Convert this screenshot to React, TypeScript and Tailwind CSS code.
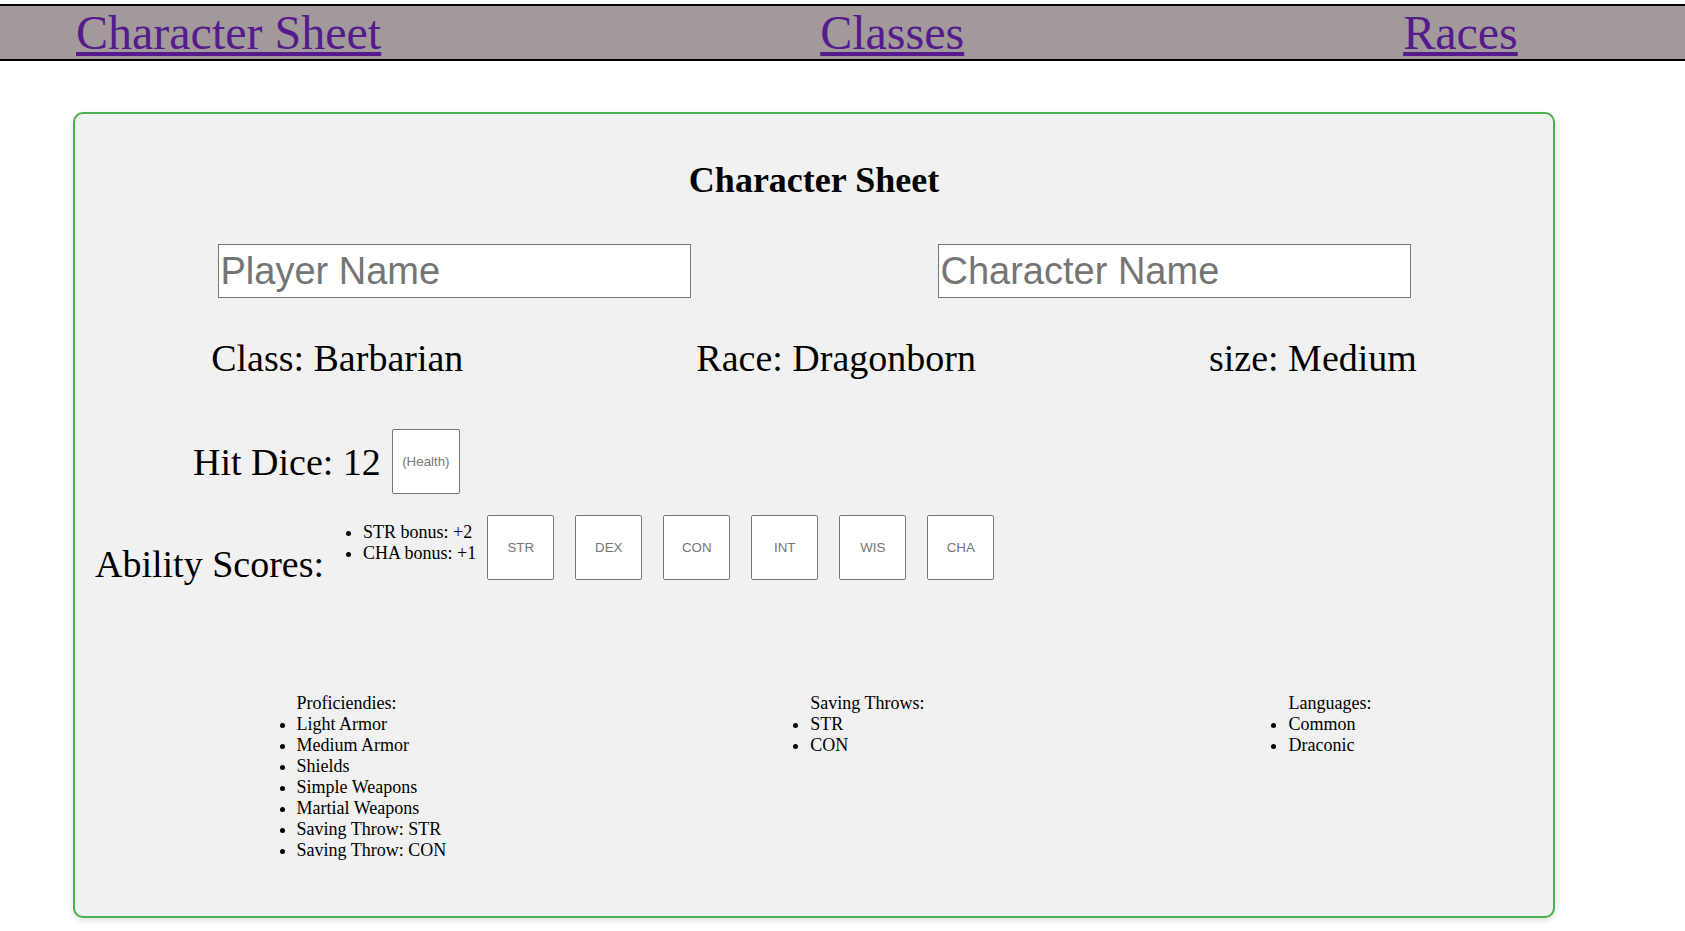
import React from "react";

const serif = "font-['Liberation_Serif',serif]";

const abilities = ["STR", "DEX", "CON", "INT", "WIS", "CHA"];

const proficiencies = [
  "Light Armor",
  "Medium Armor",
  "Shields",
  "Simple Weapons",
  "Martial Weapons",
  "Saving Throw: STR",
  "Saving Throw: CON",
];

const ScoreBox = ({ label, className = "" }: { label: string; className?: string }) => (
  <input
    type="text"
    placeholder={label}
    className={`w-[67px] h-[65px] bg-white border border-[#767676] rounded-[2px] text-center text-[13.33px] font-['Liberation_Sans',sans-serif] placeholder:text-[#757575] outline-none ${className}`}
  />
);

const ListColumn = ({ title, items }: { title: string; items: string[] }) => (
  <div className="pl-[40px] text-[18px] leading-[21px]">
    <div>{title}</div>
    <ul className="list-disc">
      {items.map((item) => (
        <li key={item}>{item}</li>
      ))}
    </ul>
  </div>
);

export default function App() {
  return (
    <div className={`min-h-screen bg-white text-black ${serif}`}>
      <nav className="mt-[4px] bg-[#a29a9a] border-y-2 border-black h-[57px] flex items-center">
        <div className="ml-[76px] flex gap-[439px] text-[48px] leading-[53px]">
          <a href="#" className="text-[#551a8b] underline">Character Sheet</a>
          <a href="#" className="text-[#551a8b] underline">Classes</a>
          <a href="#" className="text-[#551a8b] underline">Races</a>
        </div>
      </nav>

      <main className="mt-[51px] ml-[73px] w-[1482px] bg-[#f1f1f1] border-2 border-[#4caf50] rounded-[10px] shadow-[0_3px_6px_rgba(0,0,0,0.12)] pb-[55px]">
        <h1 className="mt-[46px] text-center text-[36px] font-bold leading-[41px]">Character Sheet</h1>

        <div className="mt-[43px] flex justify-center gap-[247px]">
          <input
            type="text"
            placeholder="Player Name"
            className="w-[473px] h-[54px] bg-white border border-[#767676] px-[2px] text-[38px] font-['Liberation_Sans',sans-serif] placeholder:text-[#757575] outline-none"
          />
          <input
            type="text"
            placeholder="Character Name"
            className="w-[473px] h-[54px] bg-white border border-[#767676] px-[2px] text-[38px] font-['Liberation_Sans',sans-serif] placeholder:text-[#757575] outline-none"
          />
        </div>

        <div className="mt-[38px] flex justify-center gap-[233px] text-[38px] leading-[44px]">
          <span>Class: Barbarian</span>
          <span>Race: Dragonborn</span>
          <span>size: Medium</span>
        </div>

        <div className="mt-[49px] ml-[118px] flex items-center">
          <span className="text-[38px] leading-[44px]">Hit Dice: 12</span>
          <ScoreBox label="(Health)" className="ml-[11px] w-[68px] h-[64px]" />
        </div>

        <div className="mt-[21px] ml-[20px] flex items-start">
          <span className="mt-[27px] text-[38px] leading-[44px]">Ability Scores:</span>
          <ul className="mt-[7px] ml-[-1px] pl-[40px] list-disc text-[18px] leading-[21px]">
            <li>STR bonus: +2</li>
            <li>CHA bonus: +1</li>
          </ul>
          <div className="ml-[11px] flex gap-[21px]">
            {abilities.map((a) => (
              <ScoreBox key={a} label={a} />
            ))}
          </div>
        </div>

        <div className="mt-[107px] flex justify-center items-start gap-[324px]">
          <ListColumn title="Proficiendies:" items={proficiencies} />
          <ListColumn title="Saving Throws:" items={["STR", "CON"]} />
          <ListColumn title="Languages:" items={["Common", "Draconic"]} />
        </div>
      </main>
    </div>
  );
}
